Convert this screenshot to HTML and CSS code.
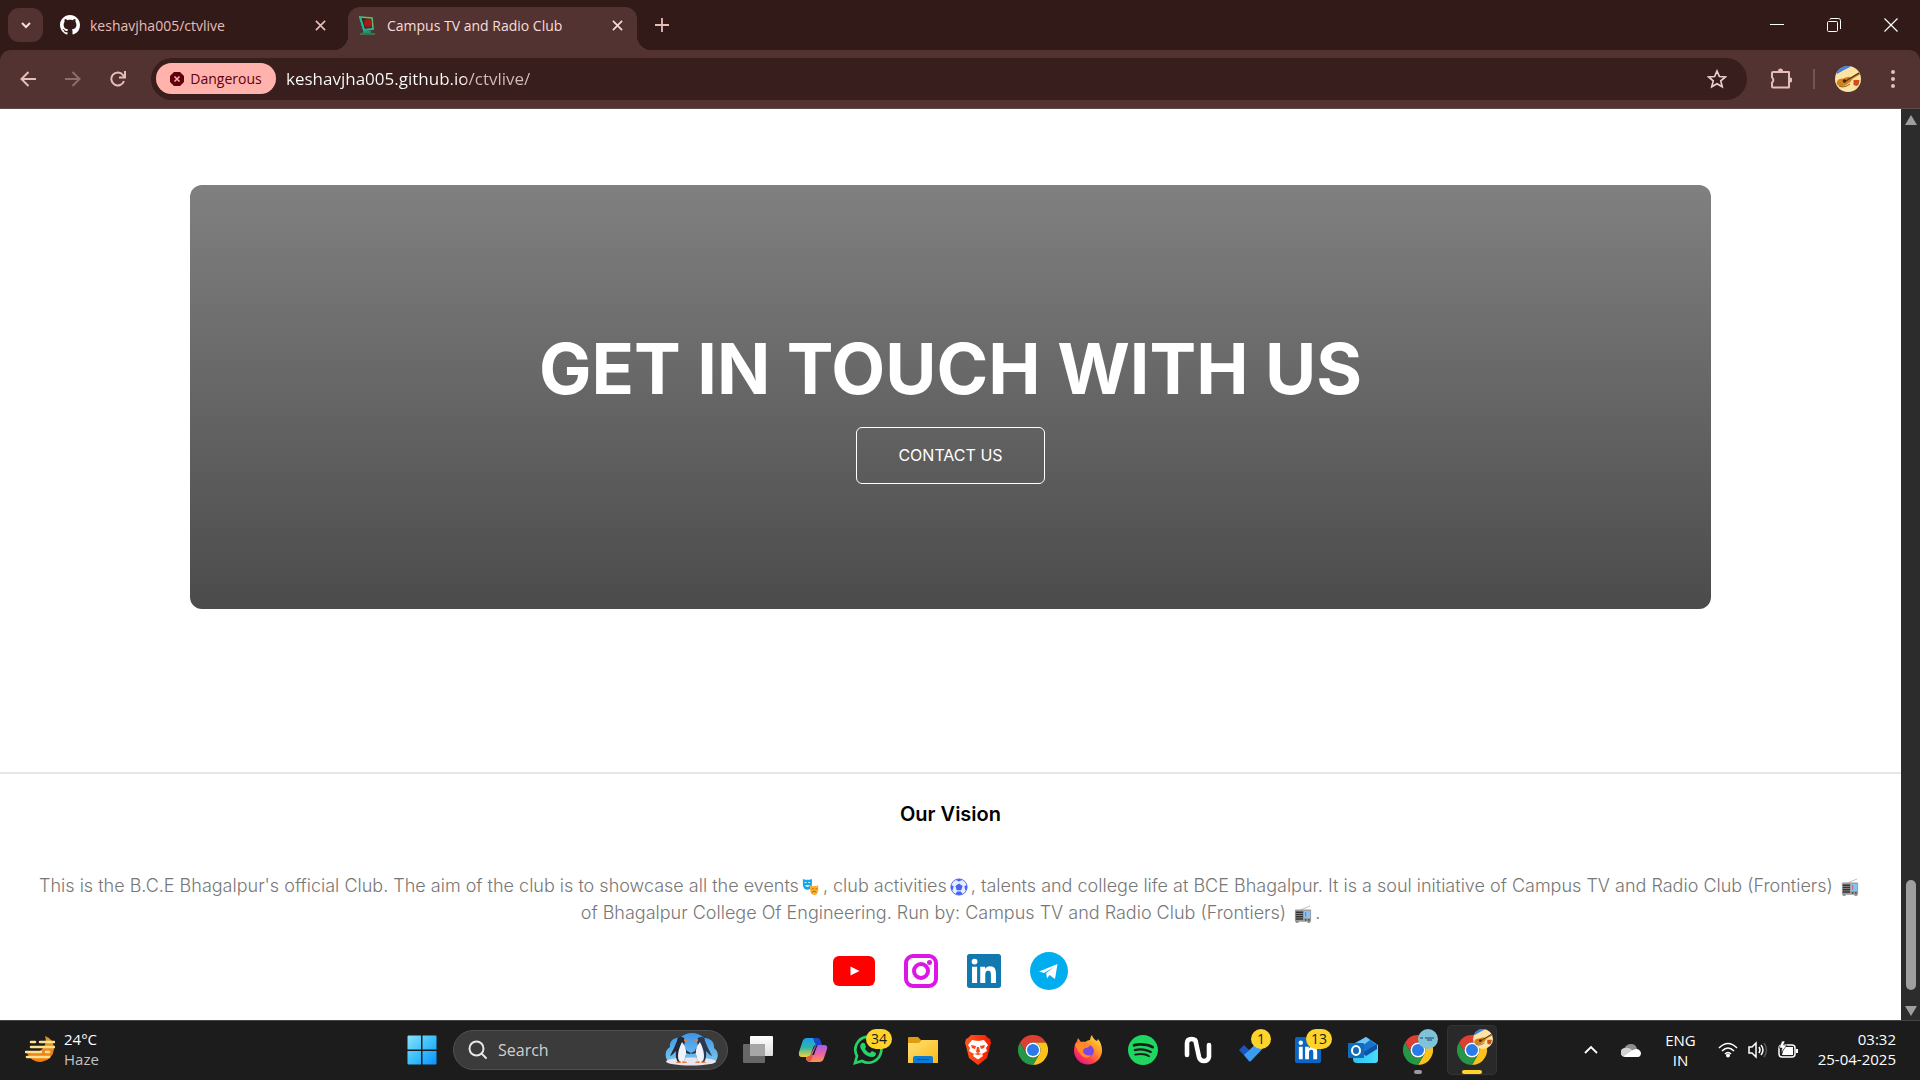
FILE: index.html
```html
<!DOCTYPE html>
<html lang="en">
<head>
<meta charset="utf-8">
<title>Campus TV and Radio Club</title>
<link rel="stylesheet" href="styles.css">
</head>
<body>
<svg class="defs" aria-hidden="true">
  <defs>
    <linearGradient id="gWin" x1="0" y1="0" x2="1" y2="1"><stop offset="0" stop-color="#8ae2ff"/><stop offset=".5" stop-color="#3cc0fb"/><stop offset="1" stop-color="#0a92ff"/></linearGradient>
    <linearGradient id="gSun" x1="0" y1="0" x2="0" y2="1"><stop offset="0" stop-color="#d99a2b"/><stop offset="1" stop-color="#f57a12"/></linearGradient>
    <linearGradient id="gView" x1="0" y1="0" x2="0" y2="1"><stop offset="0" stop-color="#fff"/><stop offset="1" stop-color="#dcdcdc"/></linearGradient>
    <linearGradient id="gCopL" x1="0" y1="0" x2="0" y2="1"><stop offset="0" stop-color="#1a9df0"/><stop offset=".5" stop-color="#2fb5a8"/><stop offset="1" stop-color="#f5d33a"/></linearGradient>
    <linearGradient id="gCopR" x1="0" y1="0" x2="0" y2="1"><stop offset="0" stop-color="#a55cf2"/><stop offset=".5" stop-color="#e864a4"/><stop offset="1" stop-color="#fb9450"/></linearGradient>
    <linearGradient id="gFold" x1="0" y1="0" x2="1" y2="1"><stop offset="0" stop-color="#ffe07c"/><stop offset="1" stop-color="#fbb90f"/></linearGradient>
    <linearGradient id="gBrave" x1="0" y1="0" x2="1" y2="0"><stop offset="0" stop-color="#ff5a1c"/><stop offset="1" stop-color="#f81c00"/></linearGradient>
    <linearGradient id="gFox" x1="1" y1="0" x2=".2" y2="1"><stop offset="0" stop-color="#fff24a"/><stop offset=".4" stop-color="#ff9a26"/><stop offset=".75" stop-color="#ff3a50"/><stop offset="1" stop-color="#e3108c"/></linearGradient>
    <linearGradient id="gOut" x1="0" y1="0" x2="1" y2="0"><stop offset="0" stop-color="#2dc4f4"/><stop offset="1" stop-color="#46dcfb"/></linearGradient>
    <linearGradient id="gSky" x1="0" y1="0" x2="0" y2="1"><stop offset="0" stop-color="#3d93e6"/><stop offset="1" stop-color="#7cc9ef"/></linearGradient>
    <symbol id="chrome" viewBox="0 0 48 48">
      <path fill="#dd3f33" d="M24 12h20.8A24 24 0 0 0 3.2 12l10.4 18A12 12 0 0 1 24 12z"/>
      <path fill="#fcc21b" d="M24 12h20.8A24 24 0 0 1 24 48l10.4-18A12 12 0 0 0 24 12z"/>
      <path fill="#279647" d="M34.4 30a12 12 0 0 1-20.8 0L3.2 12A24 24 0 0 0 24 48z"/>
      <circle cx="24" cy="24" r="12" fill="#fff"/><circle cx="24" cy="24" r="9.6" fill="#2a7bea"/>
    </symbol>
    <symbol id="guitar" viewBox="0 0 26 26">
      <circle cx="13" cy="13" r="13" fill="#fbe3a4"/>
      <path d="M2 6A13 13 0 0 1 16 .4L9 4 2 8z" fill="#3f7fe8"/>
      <path d="M24.500 6L16 11.500c-3-2-5 0-8 1-5 0-7 3-6 6 3 3 8 2 11-1 3-1 3-3 5-5l7-4z" fill="#cf8220"/>
      <path d="M24 7L9 16" stroke="#5b2c0a" stroke-width="1.2"/><circle cx="9.500" cy="15" r="1.800" fill="#4d2408"/>
      <path d="M18.500 14h6l-1 5-2 1-3-1z" fill="#c9501a"/><path d="M4 20c4 2 8 0 11-2" fill="none" stroke="#8a4a12" stroke-width="1"/>
    </symbol>
    <symbol id="cross" viewBox="0 0 12 12"><path d="M1 1l10 10M11 1L1 11" fill="none" stroke="currentColor" stroke-width="1.8"/></symbol>
    <symbol id="radio" viewBox="0 0 20 20">
      <path d="M6 6l12-5" stroke="#b9b9b9" stroke-width="1"/><path d="M2 18h3v1.500H2zM15 18h3v1.500h-3z" fill="#333"/>
      <rect x="1" y="5" width="18" height="13.500" rx="1" fill="#9b9b9b"/><path d="M2 8h8M2 10.500h8M2 13h8M2 15.500h8" stroke="#333" stroke-width="1.500"/>
      <rect x="11" y="6.500" width="7" height="8" fill="#83c3f7"/><path d="M13 8v5" stroke="#e04a4a"/><circle cx="13" cy="16.500" r="1" fill="#444"/><circle cx="16.500" cy="16.500" r="1" fill="#444"/>
    </symbol>
  </defs>
</svg>

<header class="browser">
  <div class="tabstrip">
    <button class="tab-search" aria-label="Search tabs"><svg width="12" height="12" viewBox="0 0 12 12"><path d="M2 4l4 4 4-4" fill="none" stroke="currentColor" stroke-width="2"/></svg></button>
    <div class="tab">
      <svg width="20" height="20" viewBox="0 0 16 16" fill="#fff"><path d="M8 0C3.580 0 0 3.580 0 8c0 3.540 2.290 6.530 5.470 7.590.4.070.55-.17.55-.38 0-.19-.01-.82-.01-1.490-2.010.37-2.530-.49-2.690-.94-.09-.23-.48-.94-.82-1.130-.28-.15-.68-.52-.01-.53.63-.01 1.080.58 1.230.82.72 1.210 1.870.87 2.330.66.07-.52.28-.87.51-1.070-1.780-.2-3.640-.89-3.640-3.950 0-.87.31-1.590.82-2.150-.08-.2-.36-1.020.08-2.120 0 0 .67-.21 2.200.82.64-.18 1.320-.27 2-.27s1.360.09 2 .27c1.530-1.040 2.200-.82 2.200-.82.44 1.100.16 1.920.08 2.120.51.56.82 1.270.82 2.150 0 3.070-1.870 3.750-3.650 3.950.29.25.54.73.54 1.480 0 1.070-.01 1.930-.01 2.200 0 .21.15.46.55.38A8.010 8.010 0 0 0 16 8c0-4.420-3.580-8-8-8z"/></svg>
      <span class="tab-title">keshavjha005/ctvlive</span>
      <button class="plain" aria-label="Close tab"><svg width="11" height="11"><use href="#cross"/></svg></button>
    </div>
    <div class="tab active">
      <svg width="20" height="20" viewBox="0 0 20 20"><path d="M3 2l12 1 1 11-9 1z" fill="#3d2a20" stroke="#5fbf6a" stroke-width="1.600"/><path d="M3 2l4 13 9-1" fill="none" stroke="#16b9a4" stroke-width="2"/><circle cx="11" cy="8" r="4" fill="#a81818"/><path d="M9 14l-2 3h7" fill="none" stroke="#12aa9c" stroke-width="1.500"/><path d="M3 19h15" stroke="#338a3a" stroke-width="1.600"/></svg>
      <span class="tab-title">Campus TV and Radio Club</span>
      <button class="plain" aria-label="Close tab"><svg width="11" height="11"><use href="#cross"/></svg></button>
    </div>
    <button class="plain newtab" aria-label="New tab"><svg width="14" height="14" viewBox="0 0 14 14"><path d="M7 0v14M0 7h14" stroke="currentColor" stroke-width="1.800"/></svg></button>
    <div class="window-controls">
      <button aria-label="Minimize"><svg width="14" height="14" viewBox="0 0 14 14"><path d="M0 6.500h14" stroke="#fff"/></svg></button>
      <button aria-label="Restore"><svg width="14" height="14" viewBox="0 0 14 14" fill="none" stroke="#fff"><rect x=".5" y="3.500" width="10" height="10" rx="1"/><path d="M3 1.500Q3 .5 4 .5h7.500q2 0 2 2V11"/></svg></button>
      <button aria-label="Close"><svg width="14" height="14" viewBox="0 0 14 14"><path d="M.5.500l13 13M13.500.500l-13 13" stroke="#fff" stroke-width="1.200"/></svg></button>
    </div>
  </div>
  <div class="toolbar">
    <button class="nav" aria-label="Back"><svg width="16" height="16" viewBox="0 0 16 16"><path d="M16 8H2M8.500 1L1.500 8l7 7" fill="none" stroke="currentColor" stroke-width="2"/></svg></button>
    <button class="nav dim" aria-label="Forward"><svg width="16" height="16" viewBox="0 0 16 16"><path d="M0 8h14M7.500 1l7 7-7 7" fill="none" stroke="currentColor" stroke-width="2"/></svg></button>
    <button class="nav" aria-label="Reload"><svg width="16" height="16" viewBox="0 0 16 16"><path d="M14 10A6.500 6.500 0 1 1 13 4l1.500 2M15 0v6.500H9" fill="none" stroke="currentColor" stroke-width="2"/></svg></button>
    <div class="omnibox">
      <button class="danger"><svg width="14" height="14" viewBox="0 0 14 14"><path d="M4 0h6l4 4v6l-4 4H4l-4-4V4z" fill="#60000a"/><path d="M4.500 4.500l5 5M9.500 4.500l-5 5" stroke="#ffb3ac" stroke-width="1.500"/></svg>Dangerous</button>
      <input class="url" aria-label="Address" value="keshavjha005.github.io/ctvlive/">
      <button class="plain" aria-label="Bookmark"><svg width="20" height="20" viewBox="0 0 20 20"><path d="M10 2l2.400 5.500 6 .5-4.600 3.900 1.400 5.900L10 14.700l-5.200 3.100 1.400-5.900L1.600 8l6-.5z" fill="none" stroke="#e6cfcc" stroke-width="1.700"/></svg></button>
    </div>
    <button class="tool" aria-label="Extensions"><svg width="22" height="22" viewBox="0 0 22 22"><path d="M3 4h16v15.500H3q-1 0-1-1v-4a3 3 0 0 0 0-5V5q0-1 1-1z" fill="none" stroke="#e7bdb8" stroke-width="2" stroke-linejoin="round"/><path d="M8 3a2.500 2.500 0 0 1 5 0zM20 9.500a2.500 2.500 0 0 1 0 5z" fill="#e7bdb8"/></svg></button>
    <span class="divider"></span>
    <button class="tool" aria-label="Profile"><svg width="26" height="26"><use href="#guitar"/></svg></button>
    <button class="tool menu" aria-label="Menu"><svg width="4" height="18" viewBox="0 0 4 18" fill="#e7bdb8"><circle cx="2" cy="2" r="2"/><circle cx="2" cy="9" r="2"/><circle cx="2" cy="16" r="2"/></svg></button>
  </div>
</header>

<div class="viewport">
  <div class="site">
    <main>
      <section class="cta">
        <h1>GET IN TOUCH WITH US</h1>
        <a class="cta-link" href="#contact">CONTACT US</a>
      </section>
    </main>
    <footer class="footer">
      <h2>Our Vision</h2>
      <p>This is the B.C.E Bhagalpur's official Club. The aim of the club is to showcase all the events<svg class="emoji" viewBox="0 0 20 20"><path d="M1 1q5 2 10 0v7q-1 5-5 5T1 8z" fill="#12a7ec"/><path d="M3 5h2M7 5h2" stroke="#fff"/><path d="M3 8h6q-3 4-6 0z" fill="#fff"/><path d="M9 8q5 2 9 0v6q-1 5-4.500 5T9 14z" fill="#ffaf2e"/><path d="M11 12h2M15 12h2M11 16q2.500-3 5 0" stroke="#a05c10" fill="none"/></svg>, club activities<svg class="emoji" viewBox="0 0 20 20"><circle cx="10" cy="10" r="9" fill="#e8ecff" stroke="#4a66f4"/><path d="M10 6l4 3-1.500 4.500h-5L6 9zM6 2l4 2 4-2-4-1zM1 8l3 1-1 5-2-2zM19 8l-3 1 1 5 2-2zM6 18l2-3h4l2 3-4 1z" fill="#4464f5"/></svg>, talents and college life at BCE Bhagalpur. It is a soul initiative of Campus TV and Radio Club (Frontiers) <svg class="emoji"><use href="#radio"/></svg><br>of Bhagalpur College Of Engineering. Run by: Campus TV and Radio Club (Frontiers) <svg class="emoji"><use href="#radio"/></svg>.</p>
      <nav class="social">
        <a href="#youtube" aria-label="YouTube"><svg width="42" height="30" viewBox="0 0 42 30"><rect width="42" height="30" rx="6" fill="#f00"/><path d="M17.500 10.500v9l9-4.500z" fill="#fff"/></svg></a>
        <a href="#instagram" aria-label="Instagram"><svg width="34" height="34" viewBox="0 0 34 34" fill="none" stroke="#db16e6"><rect x="2" y="2" width="30" height="30" rx="7" stroke-width="4"/><circle cx="17" cy="17" r="7" stroke-width="4"/><circle cx="25.500" cy="8.500" r="2.500" fill="#db16e6" stroke="none"/></svg></a>
        <a href="#linkedin" aria-label="LinkedIn"><svg width="34" height="34" viewBox="0 0 24 24"><path fill="#fff" d="M2 2h20v20H2z"/><path fill="#1178b0" d="M20.447 20.452h-3.554v-5.569c0-1.328-.027-3.037-1.852-3.037-1.853 0-2.136 1.445-2.136 2.939v5.667H9.351V9h3.414v1.561h.046c.477-.9 1.637-1.850 3.370-1.850 3.601 0 4.267 2.370 4.267 5.455v6.286zM5.337 7.433a2.062 2.062 0 0 1-2.063-2.065 2.064 2.064 0 1 1 2.063 2.065zm1.782 13.019H3.555V9h3.564v11.452zM22.225 0H1.771C.792 0 0 .774 0 1.729v20.542C0 23.227.792 24 1.771 24h20.451C23.200 24 24 23.227 24 22.271V1.729C24 .774 23.200 0 22.222 0h.003z"/></svg></a>
        <a href="#telegram" aria-label="Telegram"><svg width="38" height="38" viewBox="0 0 38 38"><circle cx="19" cy="19" r="19" fill="#00adee"/><path d="M9 19.500L27.500 12 25 27l-5.500-4-2.500 3.500-.8-5.500L24 15l-10 6z" fill="#fff"/></svg></a>
      </nav>
    </footer>
  </div>
  <div class="scrollbar"><span class="arrow up"></span><span class="thumb"></span><span class="arrow down"></span></div>
</div>

<div class="taskbar">
  <button class="weather">
    <svg width="30" height="30" viewBox="0 0 30 30"><path d="M20 1q9 3 9 13a14 14 0 0 1-27 4q12 1 17-6 3-5 1-11z" fill="url(#gSun)"/><path d="M6 7h4M15 7h14M6 12h23M1 17h15M21 17h3M2 22h22" stroke="#ffe08a" stroke-width="2.600" stroke-linecap="round"/></svg>
    <span class="lines"><span>24°C</span><span class="muted">Haze</span></span>
  </button>
  <div class="apps">
    <button class="app" aria-label="Start"><svg width="30" height="30" viewBox="0 0 30 30"><path d="M.5 1.500q0-1 1-1H14v14H.500zM15.500.500h13q1 0 1 1v13h-14zM.5 16H14v13.500H1.500q-1 0-1-1zM15.500 16h14v12.500q0 1-1 1h-13z" fill="url(#gWin)"/></svg></button>
    <label class="search">
      <svg width="20" height="20" viewBox="0 0 20 20" fill="none" stroke="#e6e6e6" stroke-width="2" stroke-linecap="round"><circle cx="8.500" cy="8.500" r="7"/><path d="M13.500 13.500L18 18"/></svg>
      <input type="text" placeholder="Search" aria-label="Search">
      <svg width="56" height="34" viewBox="0 0 56 34">
        <path d="M8 30a9 9 0 0 1-1-16 8 8 0 0 1 10-9 17 17 0 0 1 24 0 9 9 0 0 1 10 10 9 9 0 0 1-3 16z" fill="url(#gSky)"/><ellipse cx="28" cy="28.500" rx="25" ry="4" fill="#e9e4f2"/>
        <path d="M14 8q0-4 4-4 4 0 4 4l-1 5q2 3 3 5l4 2-1 1-4-1q0 6-3 9h-5q-3-4-2-11l-4 4-2 1 4-8z" fill="#232838"/><path d="M19 9q5 6 4 12-1 8-4 8-4 0-4-6 0-6 4-14z" fill="#eef2fb"/><path d="M21 6l5 1-5 1.500zM14 28.500h3l1 1.500h-5zM20 28.500h3l1 1.500h-5z" fill="#ef7d32"/>
        <path d="M42 8q0-4-4-4-4 0-4 4l1 5q-3 3-3 5l-4 2 1 1 4-1q0 6 3 9h5q3-4 2-11l4 4 2 1-4-8z" fill="#2f374d"/><path d="M37 9q-5 6-4 12 1 8 4 8 4 0 4-6 0-6-4-14z" fill="#eef2fb"/><path d="M35 6l-5 1 5 1.500zM33 28.500h3l1 1.500h-5zM39 28.500h3l1 1.500h-5z" fill="#ef7d32"/>
      </svg>
    </label>
    <button class="app" aria-label="Task view"><svg width="30" height="30" viewBox="0 0 30 30"><rect x="7" y="1" width="23" height="20" rx="1" fill="url(#gView)"/><rect x="0" y="9" width="22" height="19" rx="1" fill="#666"/><path d="M7 9h15v12H7z" fill="#a6a6a6"/></svg></button>
    <button class="app" aria-label="Copilot"><svg width="30" height="30" viewBox="0 0 30 30"><path d="M9 3h9q3 0 4 4l1 3h-5q-2 0-3 3l-2 6q-1 3-4 3H4q-4 0-3-5l3-9q1-5 5-5z" fill="url(#gCopL)"/><path d="M15 3h4q3 0 4 4l1 3h-6l-2-4z" fill="#1b45c4"/><path d="M21 27h-9q-3 0-4-3v-2q4 0 5-3l3-6q1-3 4-3h6q4 0 3 4l-3 9q-1 4-5 4z" fill="url(#gCopR)"/><path d="M14 20l4-9q1-1 2-1-1 1-2 4l-2 6z" fill="#1c1c1c"/><path d="M8 22q4 0 5-3l2 1-2 6q-4 2-5-4z" fill="#e8573c"/></svg></button>
    <button class="app" aria-label="WhatsApp"><svg width="30" height="30" viewBox="0 0 30 30"><path d="M2 28l2-7A13 13 0 1 1 9 26z" fill="none" stroke="#25d366" stroke-width="2.700"/><path d="M9 8q2-1 3 1l1 3-1 2q2 3 5 4l2-2 4 2q0 4-4 4-7 0-11-8-2-4 1-6z" fill="#25d366"/></svg><span class="badge">34</span></button>
    <button class="app" aria-label="File Explorer"><svg width="30" height="30" viewBox="0 0 30 30"><path d="M0 3q0-1 1-1h9l3 3h17v8H0z" fill="#dd9d0d"/><path d="M0 8h11l3-3h15q1 0 1 1v22H0z" fill="url(#gFold)"/><path d="M5 28v-5q0-2 2-2h16q2 0 2 2v5z" fill="#0b7bd4"/><path d="M9 24.500h12" stroke="#075299"/></svg></button>
    <button class="app" aria-label="Brave"><svg width="30" height="30" viewBox="0 0 30 30"><path d="M8 0h14l3 3 2 1 1 4-1 3-3 12-9 7-9-7L3 11 2 8l1-4 2-1z" fill="url(#gBrave)"/><path d="M9 5l6 1 6-1 4 5-2 3 1 3-5 3 1 2-5 3.500-5-3.500 1-2-5-3 1-3-2-3z" fill="#fff"/><path d="M8 10l5 1-1 3-3-1zM22 10l-5 1 1 3 3-1zM14 12h2l1 5-2 1-2-1zM11 19l4-1 4 1-4 1z" fill="#fb4315"/></svg></button>
    <button class="app" aria-label="Chrome"><svg width="30" height="30"><use href="#chrome"/></svg></button>
    <button class="app" aria-label="Firefox"><svg width="30" height="30" viewBox="0 0 30 30"><path d="M19 0q1 4 5 6l1-2q4 5 4 11A14 14 0 0 1 1 16Q1 10 4 6l1-3 3 4q2-1 4 0 3-2 5-2 0-3 2-5z" fill="url(#gFox)"/><circle cx="15" cy="16" r="6" fill="#7b46e4"/><path d="M2 9q4-3 9-1l6 2q-1 3-5 3-2 1-2 4 3 5 9 3-5 5-10 1-5-5-7-12z" fill="#ff8a2a"/></svg></button>
    <button class="app" aria-label="Spotify"><svg width="30" height="30" viewBox="0 0 24 24" fill="#1ed760"><path d="M12 0C5.400 0 0 5.400 0 12s5.400 12 12 12 12-5.400 12-12S18.660 0 12 0zm5.521 17.340c-.24.359-.66.48-1.021.24-2.820-1.740-6.360-2.101-10.561-1.141-.418.122-.779-.179-.899-.539-.12-.421.18-.78.54-.9 4.560-1.021 8.520-.6 11.640 1.320.42.18.479.659.301 1.020zm1.440-3.300c-.301.42-.841.6-1.262.3-3.239-1.980-8.159-2.580-11.939-1.380-.479.12-1.020-.12-1.140-.6-.12-.48.12-1.021.6-1.141C9.600 9.900 15 10.561 18.720 12.840c.361.181.54.78.241 1.200zm.12-3.360C15.240 8.400 8.820 8.160 5.160 9.301c-.6.179-1.200-.181-1.380-.721-.18-.601.18-1.200.72-1.381 4.260-1.260 11.280-1.020 15.721 1.621.539.3.719 1.020.419 1.560-.299.421-1.020.599-1.559.3z"/></svg></button>
    <button class="app" aria-label="Nothing X"><svg width="30" height="30" viewBox="0 0 30 30"><path d="M4 20V8q0-4 4.500-4T13 8l3 14q1 4 5 4t5-4V10" fill="none" stroke="#fff" stroke-width="4.600" stroke-linecap="round"/></svg></button>
    <button class="app" aria-label="To Do"><svg width="30" height="30" viewBox="0 0 30 30"><path d="M1 15l5-5 10 10-5 6z" fill="#1b55bd"/><path d="M11 26L6 20 24 3l6 5-17 18q-1 1-2 0z" fill="#3b9cf0"/></svg><span class="badge">1</span></button>
    <button class="app" aria-label="LinkedIn"><svg width="26" height="26" viewBox="0 0 24 24"><path fill="#fff" d="M2 2h20v20H2z"/><path fill="#0a66c2" d="M20.447 20.452h-3.554v-5.569c0-1.328-.027-3.037-1.852-3.037-1.853 0-2.136 1.445-2.136 2.939v5.667H9.351V9h3.414v1.561h.046c.477-.9 1.637-1.850 3.370-1.850 3.601 0 4.267 2.370 4.267 5.455v6.286zM5.337 7.433a2.062 2.062 0 0 1-2.063-2.065 2.064 2.064 0 1 1 2.063 2.065zm1.782 13.019H3.555V9h3.564v11.452zM22.225 0H1.771C.792 0 0 .774 0 1.729v20.542C0 23.227.792 24 1.771 24h20.451C23.200 24 24 23.227 24 22.271V1.729C24 .774 23.200 0 22.222 0h.003z"/></svg><span class="badge">13</span></button>
    <button class="app" aria-label="Outlook"><svg width="30" height="30" viewBox="0 0 30 30"><path d="M5 9L18 2l12 8v15q0 3-3 3H9q-4 0-4-4z" fill="url(#gOut)"/><path d="M5 10L18 2l11 8-14 9z" fill="#1873cf"/><path d="M5 10L18 2l4 3L10 14z" fill="#73c5f7"/><path d="M14 18l15-9v5l-11 7z" fill="#0f51a5"/><rect y="8" width="16" height="15" rx="1" fill="#0f6cbd"/><ellipse cx="8" cy="15.500" rx="4" ry="4.500" fill="none" stroke="#fff" stroke-width="2"/></svg></button>
    <button class="app running" aria-label="Chrome, second profile"><svg width="30" height="30"><use href="#chrome"/></svg><span class="profile"><svg width="20" height="20" viewBox="0 0 20 20"><circle cx="10" cy="10" r="10" fill="#80c3d9"/><path d="M2 9h3M7 9h9M9 11h5" stroke="#3b6f8c" stroke-width="1.400"/></svg></span></button>
    <button class="app running current" aria-label="Chrome, current window"><svg width="30" height="30"><use href="#chrome"/></svg><span class="profile"><svg width="20" height="20"><use href="#guitar"/></svg></span></button>
  </div>
  <div class="tray">
    <button class="plain" aria-label="Show hidden icons"><svg width="14" height="14" viewBox="0 0 14 14"><path d="M1 10l6-6 6 6" fill="none" stroke="#fff" stroke-width="1.800"/></svg></button>
    <button class="plain cloud" aria-label="OneDrive"><svg width="20" height="14" viewBox="0 0 20 14"><path d="M3 6Q5 1 10 1t6 5l-6 4z" fill="#8d8d8d"/><path d="M4 14a4 4 0 0 1 0-9q4-1 7 2l8 6-2 1z" fill="#d2d2d2"/><path d="M3 13l9-6q6-3 8 3 0 4-4 4H4z" fill="#fff"/></svg></button>
    <button class="lang"><span>ENG</span><span>IN</span></button>
    <button class="status" aria-label="Network, sound, battery">
      <svg width="20" height="16" viewBox="0 0 20 16" fill="none" stroke="#fff" stroke-width="1.600"><path d="M1 6q9-9 18 0M4 9q6-6 12 0M7 12q3-3 6 0"/><circle cx="10" cy="13.500" r="1.200" fill="#fff"/></svg>
      <svg width="20" height="18" viewBox="0 0 20 18" fill="none" stroke="#fff" stroke-width="1.500"><path d="M1 6h3l4-4v14l-4-4H1zM11 6q2 3 0 6M13 4q4 5 0 10"/><path d="M16 2q5 7 0 14" stroke="#555"/></svg>
      <svg width="20" height="18" viewBox="0 0 20 18"><rect x="1" y="4" width="16" height="12" rx="3" fill="none" stroke="#fff" stroke-width="1.500"/><path d="M7 6h8v8H4l1-4z" fill="#fff"/><path d="M18 8h2v4h-2z" fill="#fff"/><path d="M4 0h3L5.500 4H9l-6 8 1-5H1z" fill="#fff" stroke="#1c1c1c" stroke-width=".6"/></svg>
    </button>
    <button class="clock"><span>03:32</span><span>25-04-2025</span></button>
  </div>
</div>
</body>
</html>
```
FILE: styles.css
```css
* { box-sizing: border-box; }
body {
  margin: 0;
  min-height: 100vh;
  display: flex;
  flex-direction: column;
  background: #fff;
  font-family: "Open Sans", "Noto Sans", sans-serif;
}
button {
  display: flex;
  align-items: center;
  justify-content: center;
  padding: 0;
  border: 0;
  background: none;
  color: inherit;
  font: inherit;
}
input { border: 0; outline: 0; background: none; font: inherit; min-width: 0; }
svg { display: block; flex: none; }
.defs { position: absolute; width: 0; height: 0; }

/* Browser frame */
.browser { background: #311a17; }
.tabstrip {
  display: flex;
  align-items: center;
  height: 50px;
  padding-left: 8px;
  color: #e7bdb8;
  font-size: 14px;
}
.tab-search { width: 35px; height: 34px; border-radius: 11px; background: #523331; color: #f6dedb; }
.tab {
  display: flex;
  align-items: center;
  gap: 10px;
  width: 288px;
  padding: 0 5px 0 17px;
}
.tab-title { flex: 1; white-space: nowrap; }
.active {
  position: relative;
  align-self: flex-end;
  width: 289px;
  height: 43px;
  margin-left: 17px;
  padding: 0 14px 7px 9px;
  border-radius: 12px 12px 0 0;
  background: #523331;
  color: #f6dedb;
}
.active::before, .active::after {
  content: "";
  position: absolute;
  bottom: 0;
  width: 14px;
  height: 14px;
}
.active::before { right: 100%; background: radial-gradient(circle at 0 0, #311a17 14px, #523331 14px); }
.active::after { left: 100%; background: radial-gradient(circle at 100% 0, #311a17 14px, #523331 14px); }
.newtab { margin-left: 18px; }
.window-controls { display: flex; margin-left: auto; padding-right: 1px; }
.window-controls button { width: 57px; height: 48px; }

.toolbar {
  display: flex;
  align-items: center;
  height: 59px;
  padding: 0 15px 1px 5px;
  border-bottom: 1px solid #5e4a48;
  border-radius: 11px 11px 0 0;
  background: #523331;
  color: #e7bdb8;
}
.nav { width: 45px; height: 40px; }
.dim { color: #8f6c69; }
.omnibox {
  flex: 1;
  display: flex;
  align-items: center;
  height: 42px;
  margin-left: 11px;
  padding: 0 20px 0 5px;
  border-radius: 21px;
  background: #381e1c;
}
.danger {
  gap: 6px;
  width: 120px;
  height: 31px;
  border-radius: 16px;
  background: #ffb3ac;
  color: #60000a;
  font-size: 14px;
}
.url {
  flex: 1;
  padding: 0;
  margin-left: 10px;
  font-size: 17px;
  color: transparent;
  background: linear-gradient(90deg, #fff 180px, #d3bfbc 180px);
  background-clip: text;
}
.tool { width: 44px; }
.toolbar > .omnibox + .tool { margin-left: 12px; }
.divider { width: 2px; height: 20px; margin: 0 11px 0 10px; background: #79534f; }
.menu { margin-left: 1px; margin-right: -10px; }

/* Page */
.viewport { flex: 1; display: flex; }
.site {
  flex: 1;
  display: flex;
  flex-direction: column;
  font-family: Inter, "Open Sans", sans-serif;
}
main { flex: 1; padding: 76px 0 160px; }
.cta {
  display: flex;
  flex-direction: column;
  align-items: center;
  width: 80%;
  margin: 0 auto;
  padding: 144px 0 125px;
  border-radius: 12px;
  background: linear-gradient(#808080, #4b4b4b);
  color: #fff;
}
h1 { margin: 0; font-size: 70px; line-height: 80px; font-weight: 700; }
.cta-link {
  margin-top: 18px;
  padding: 0 41px;
  border: 1px solid #fff;
  border-radius: 6px;
  color: #fff;
  font-size: 16px;
  line-height: 55px;
  text-decoration: none;
}
.footer { border-top: 2px solid #e7e7e7; padding: 25px 0 30px; text-align: center; }
h2 { margin: 0; font-size: 20px; line-height: 30px; font-weight: 600; }
.footer p { margin: 43px 0 26px; color: #777; font-size: 18px; line-height: 27px; font-weight: 300; }
.emoji { display: inline-block; width: 18px; height: 18px; margin: 0 3px; vertical-align: -4px; }
.social { display: flex; align-items: center; justify-content: center; gap: 29px; }

.scrollbar {
  display: flex;
  flex-direction: column;
  align-items: center;
  width: 19px;
  padding: 6px 0 4px;
  background: #2c2c2c;
}
.arrow { border: 6px solid transparent; }
.up { border-bottom: 10px solid #9f9f9f; border-top: 0; margin-bottom: auto; }
.down { border-top: 10px solid #9f9f9f; border-bottom: 0; margin-top: 16px; }
.thumb { width: 10px; height: 110px; border-radius: 5px; background: #9f9f9f; }

/* Taskbar */
.taskbar {
  display: grid;
  grid-template-columns: 1fr auto 1fr;
  align-items: center;
  height: 60px;
  padding: 0 26px 2px 0;
  border-top: 1px solid #444;
  background: #1c1c1c;
  color: #fff;
  font-size: 15px;
  line-height: 20px;
}
.weather { justify-self: start; gap: 9px; padding-left: 25px; }
.lines { display: flex; flex-direction: column; padding-bottom: 2px; text-align: left; }
.muted { color: #c2c2c2; }
.apps { display: flex; align-items: center; }
.app { position: relative; width: 55px; height: 50px; }
.search {
  display: flex;
  align-items: center;
  width: 275px;
  height: 40px;
  margin: 0 2px 0 4px;
  padding: 0 8px 0 14px;
  border: 1px solid #505050;
  border-radius: 20px;
  background: #3b3b3b;
}
.search input { flex: 1; margin-left: 10px; padding: 0; font-size: 16px; color: #fff; }
.search input::placeholder { color: #d0d0d0; }
.badge {
  position: absolute;
  top: 4px;
  left: 26px;
  min-width: 20px;
  padding: 0 5px;
  border-radius: 10px;
  background: #ffd42a;
  color: #1c1c1c;
  font-size: 14px;
}
.profile { position: absolute; top: 4px; left: 28px; }
.running::after {
  content: "";
  position: absolute;
  bottom: 1px;
  left: 50%;
  width: 8px;
  height: 4px;
  margin-left: -4px;
  border-radius: 2px;
  background: #9a9a9a;
}
.current { width: 50px; margin: 0 3px 0 2px; border-radius: 5px; background: #292929; box-shadow: inset 0 0 0 1px #343434; }
.current .profile { left: 26px; }
.current::after { width: 20px; margin-left: -10px; background: #ffd42a; }
.tray { display: flex; align-items: center; justify-self: end; margin-right: -2px; }
.cloud { margin: 0 24px 0 23px; }
.lang { flex-direction: column; }
.status { gap: 10px; margin: 0 20px 0 22px; }
.clock { flex-direction: column; align-items: flex-end; padding-bottom: 2px; }
```
